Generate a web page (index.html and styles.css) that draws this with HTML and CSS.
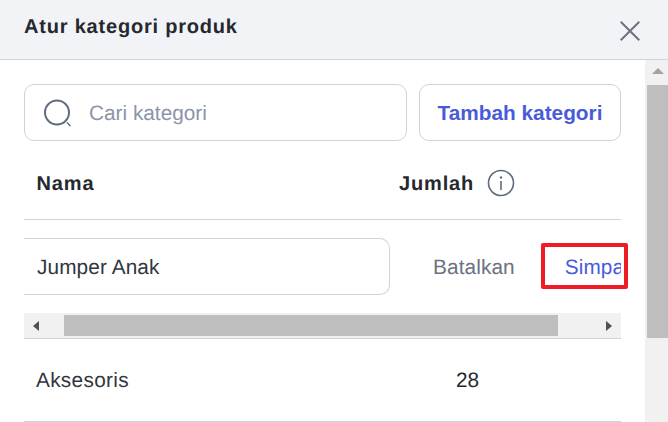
FILE: index.html
```html
<!DOCTYPE html>
<html lang="id">
<head>
<meta charset="utf-8">
<title>Atur kategori produk</title>
<link rel="stylesheet" href="styles.css">
</head>
<body>
<div class="modal">
  <header class="modal-head">
    <h1 class="modal-title">Atur kategori produk</h1>
    <button class="close" aria-label="Tutup">
      <svg width="20" height="20" viewBox="0 0 20 20"><path d="M.7.7 19.3 19.3M19.3.7 .7 19.3" fill="none" stroke="#6b7280" stroke-width="2"/></svg>
    </button>
  </header>
  <div class="modal-body">
    <main class="content">
      <div class="tools">
        <div class="search">
          <svg class="search-icon" width="30" height="30" viewBox="0 0 30 30"><circle cx="14" cy="13.5" r="12" fill="none" stroke="#5f6b7e" stroke-width="2"/><path d="M24 23.5 27.5 27" fill="none" stroke="#5f6b7e" stroke-width="1.5"/></svg>
          <span class="placeholder">Cari kategori</span>
        </div>
        <button class="add">Tambah kategori</button>
      </div>
      <div class="table-head">
        <span class="th-name">Nama</span>
        <span class="th-count">Jumlah</span>
        <svg class="info" width="28" height="28" viewBox="0 0 28 28"><circle cx="14" cy="14" r="12.5" fill="none" stroke="#5f6b7e" stroke-width="1.6"/><circle cx="14" cy="8.5" r="1.2" fill="#5f6b7e"/><path d="M14 12v9" stroke="#5f6b7e" stroke-width="1.6"/></svg>
      </div>
      <div class="edit-row">
        <div class="name-input">Jumper Anak</div>
        <span class="cancel">Batalkan</span>
        <span class="save">Simpan</span>
      </div>
      <div class="hscroll">
        <span class="arrow-left"></span>
        <span class="hthumb"></span>
        <span class="arrow-right"></span>
      </div>
      <div class="row">
        <span class="cell-name">Aksesoris</span>
        <span class="cell-count">28</span>
      </div>
    </main>
    <div class="vscroll">
      <span class="arrow-up"></span>
      <span class="vthumb"></span>
    </div>
  </div>
  <div class="highlight"></div>
</div>
</body>
</html>
```
FILE: styles.css
```css
* { box-sizing: border-box; }
html, body { margin: 0; padding: 0; }
body {
  width: 668px;
  height: 422px;
  overflow: hidden;
  background: #fff;
  font-family: "Liberation Sans", Arial, sans-serif;
  text-rendering: geometricPrecision;
}
.modal { position: relative; width: 668px; height: 422px; overflow: hidden; }
.modal-head {
  height: 60px;
  padding: 0 28px 0 24px;
  display: flex;
  justify-content: space-between;
  background: #f1f3f7;
  border-bottom: 1px solid #cfd4dc;
}
.modal-title {
  margin: 16px 0 0;
  font-size: 20px;
  line-height: 22px;
  font-weight: 700;
  letter-spacing: 0.8px;
  color: #25282d;
}
.close { margin: 21px 0 0; padding: 0; border: 0; background: none; width: 20px; height: 20px; display: block; }
.close svg { display: block; }
.modal-body { display: flex; height: 362px; }
.content { width: 645px; padding: 24px 24px 0; flex: none; }
.tools { display: flex; gap: 12px; height: 57px; }
.search {
  width: 383px;
  border: 1px solid #cfd4dc;
  border-radius: 10px;
  display: flex;
  align-items: center;
  padding-left: 18px;
}
.search-icon { flex: none; margin-top: 3px; }
.placeholder { margin: 2px 0 0 16px; font-size: 20.8px; color: #8b95a7; }
.add {
  width: 202px;
  padding: 0;
  border: 1px solid #cfd4dc;
  border-radius: 10px;
  background: #fff;
  color: #4a5bd9;
  font: 700 20.8px "Liberation Sans", Arial, sans-serif;
}
.table-head {
  height: 79px;
  display: flex;
  align-items: center;
  border-bottom: 1px solid #cfd4dc;
  padding: 8px 0 0 12.5px;
  font-size: 20px;
  font-weight: 700;
  letter-spacing: 0.85px;
  color: #25282d;
}
.th-name { width: 362.5px; }
.th-count { width: 88px; }
.info { margin-bottom: 2px; }
.edit-row {
  height: 93px;
  padding-top: 18px;
  display: flex;
  font-size: 20.8px;
  letter-spacing: 0.1px;
  white-space: nowrap;
  overflow: hidden;
}
.name-input {
  flex: none;
  width: 366px;
  height: 57px;
  line-height: 57px;
  padding-left: 13px;
  border: 1px solid #cfd4dc;
  border-left: 0;
  border-radius: 0 10px 10px 0;
  color: #31363f;
}
.cancel { margin-left: 43px; line-height: 59px; color: #6b7280; }
.save { margin-left: 50px; line-height: 59px; color: #4a5bd9; }
.hscroll {
  height: 26px;
  display: flex;
  align-items: center;
  background: #f1f1f1;
  border-bottom: 1px solid #cfd4dc;
}
.arrow-left { margin-left: 9px; width: 0; height: 0; border: 5.5px solid transparent; border-left: 0; border-right: 6px solid #505050; }
.hthumb { margin-left: 25px; width: 494px; height: 21px; background: #bebebe; }
.arrow-right { margin-left: 48px; width: 0; height: 0; border: 5.5px solid transparent; border-right: 0; border-left: 6px solid #505050; }
.row {
  height: 83px;
  display: flex;
  align-items: center;
  border-bottom: 1px solid #cfd4dc;
  padding: 2px 0 0 12px;
  font-size: 20.8px;
  color: #31363f;
}
.cell-name { width: 420px; letter-spacing: 0.3px; }
.cell-count { color: #25282d; }
.vscroll { flex: 1; padding-left: 2px; display: flex; flex-direction: column; background: #f1f1f1; }
.arrow-up { margin: 8px auto 0; width: 0; height: 0; border: 6px solid transparent; border-top: 0; border-bottom: 6px solid #a3a3a3; }
.vthumb { margin-top: 11px; height: 253px; background: #bebebe; }
.highlight {
  position: absolute;
  left: 541px;
  top: 243px;
  width: 87px;
  height: 46px;
  border: 4px solid #ee1c25;
  border-radius: 2px;
}
```
